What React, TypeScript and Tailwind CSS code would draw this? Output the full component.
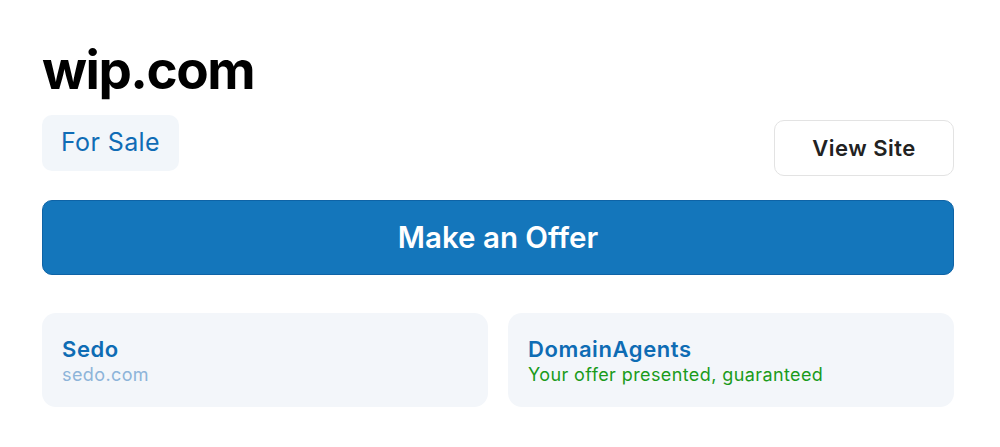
export default function App() {
  return (
    <div
      className="w-[1000px] h-[447px] bg-white px-[42px] pt-[40px]"
      style={{ fontFamily: "Inter, 'Noto Sans', sans-serif" }}
    >
      <h1 className="text-[53px] leading-[60px] font-bold text-black tracking-[-1.5px]">wip.com</h1>

      <div className="flex items-start justify-between mt-[15px] pr-[4px]">
        <div className="h-[56px] w-[137px] flex items-center justify-center rounded-[10px] bg-[#f2f6fa] text-[25px] tracking-[0.4px] text-[#0f6cb5]">
          For Sale
        </div>
        <button className="mt-[5px] h-[56px] w-[180px] flex items-center justify-center rounded-[10px] border border-[#e3e3e3] bg-white text-[22px] tracking-[0.5px] font-semibold text-[#222]">
          View Site
        </button>
      </div>

      <button className="mt-[24px] w-[912px] h-[75px] flex items-center justify-center rounded-[10px] bg-[#1476bb] border border-[#0e63a6] text-white text-[29.5px] font-semibold">
        Make an Offer
      </button>

      <div className="mt-[38px] w-[912px] grid grid-cols-2 gap-[20px]">
        <div className="h-[94px] rounded-[14px] bg-[#f3f6fa] px-[20px] pt-[22px]">
          <div className="text-[22px] leading-[28px] tracking-[0.6px] font-semibold text-[#0e6cb4]">Sedo</div>
          <div className="text-[18px] leading-[24px] tracking-[0.4px] text-[#8db4d9]">sedo.com</div>
        </div>
        <div className="h-[94px] rounded-[14px] bg-[#f3f6fa] px-[20px] pt-[22px]">
          <div className="text-[22px] leading-[28px] tracking-[0.6px] font-semibold text-[#0e6cb4]">DomainAgents</div>
          <div className="text-[18px] leading-[24px] tracking-[0.4px] text-[#1a9b1a]">Your offer presented, guaranteed</div>
        </div>
      </div>
    </div>
  );
}
